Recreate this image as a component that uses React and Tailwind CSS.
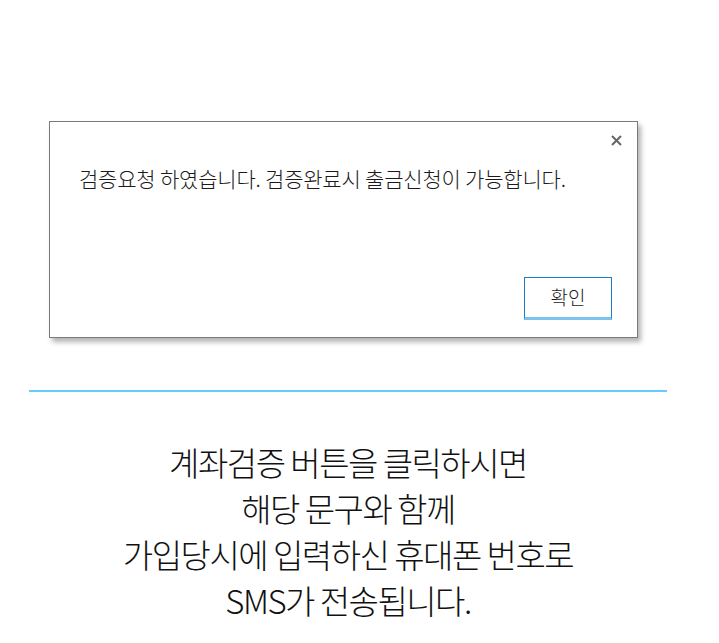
export default function App() {
  return (
    <div
      className="min-h-screen bg-white text-[#222]"
      style={{ fontFamily: '"Noto Sans CJK KR", "Noto Sans", sans-serif' }}
    >
      <div className="ml-[29px] w-[638px] pt-[121px]">
        <div className="ml-[20px] w-[589px] h-[217px] border border-[#7a7a7a] bg-white shadow-[3px_4px_5px_rgba(0,0,0,0.3)] flex flex-col">
          <div className="flex justify-end pt-[13px] pr-[15px]">
            <button className="w-[11px] h-[11px] text-[#666]">
              <svg viewBox="0 0 11 11" width="11" height="11">
                <path d="M1 1L10 10M10 1L1 10" stroke="currentColor" strokeWidth="2" />
              </svg>
            </button>
          </div>
          <p className="pl-[29px] mt-[17px] text-[21px] tracking-[-0.2px] font-light text-[#1a1a1a]">
            검증요청 하였습니다. 검증완료시 출금신청이 가능합니다.
          </p>
          <div className="mt-auto flex justify-end pr-[25px] pb-[17px]">
            <button className="w-[88px] h-[43px] border border-[#1e7bc4] border-b-[3px] border-b-[#7cc4ee] text-[19px] font-light text-[#1a1a1a]">
              확인
            </button>
          </div>
        </div>

        <div className="mt-[52px] h-[2px] bg-[#66ccff]" />

        <div className="pt-[47px] text-center text-[33px] leading-[46px] font-light tracking-[-1.5px] text-[#111]">
          <p>계좌검증 버튼을 클릭하시면</p>
          <p>해당 문구와 함께</p>
          <p>가입당시에 입력하신 휴대폰 번호로</p>
          <p>SMS가 전송됩니다.</p>
        </div>
      </div>
    </div>
  );
}
